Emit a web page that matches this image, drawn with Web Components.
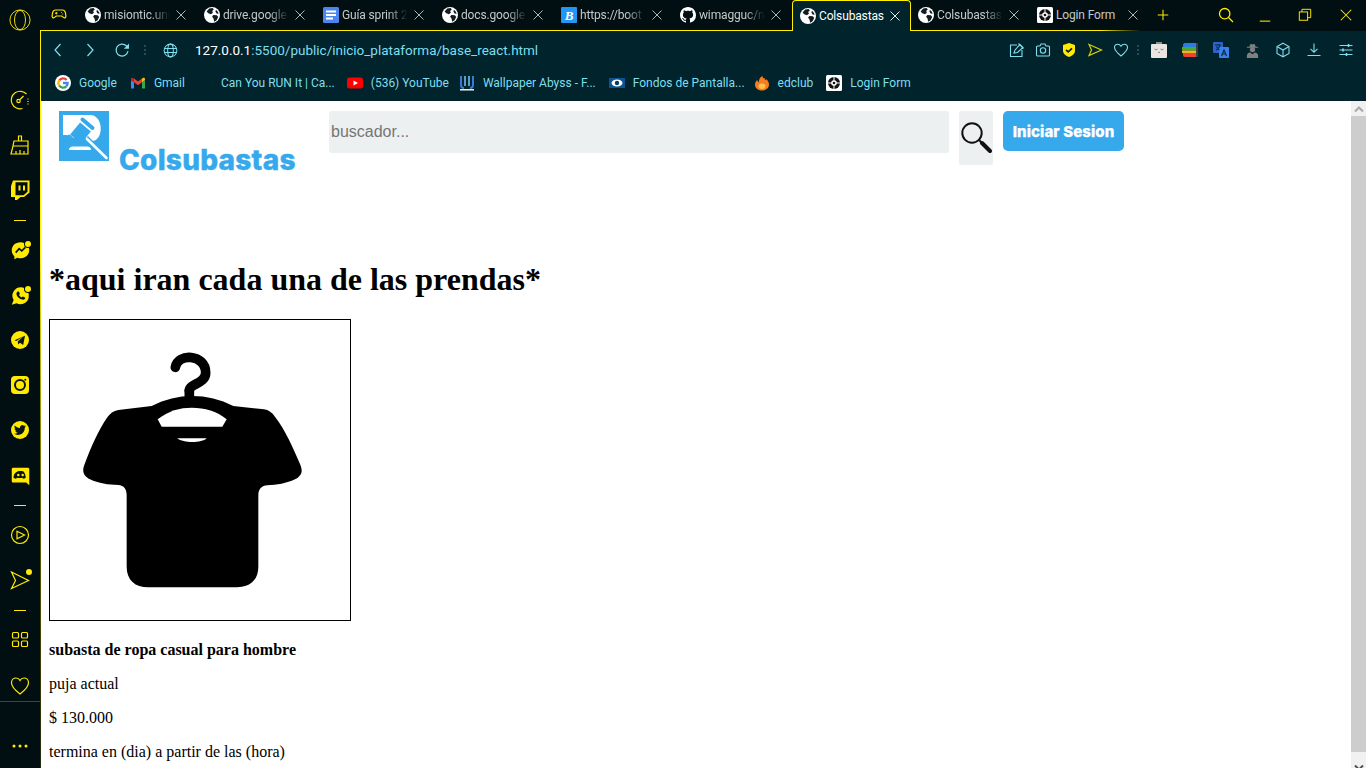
<!DOCTYPE html>
<html lang="es">
<head>
<meta charset="utf-8">
<title>Colsubastas</title>
<style>
    html, body { margin: 0; height: 100%; overflow: hidden; background: #020f12; }
    body { display: flex; font-family: 'Roboto', sans-serif; }
</style>
</head>
<body>
<op-browser>
    <op-rail slot="rail"></op-rail>
    <op-tabstrip slot="tabs">
        <op-tab icon="globe">misiontic.uni</op-tab>
        <op-tab icon="globe">drive.google</op-tab>
        <op-tab icon="gdoc">Guía sprint 2</op-tab>
        <op-tab icon="globe">docs.google</op-tab>
        <op-tab icon="bootstrap">https://boot</op-tab>
        <op-tab icon="github">wimagguc/n</op-tab>
        <op-tab icon="globe" active>Colsubastas</op-tab>
        <op-tab icon="globe">Colsubastas</op-tab>
        <op-tab icon="codepen" solid>Login Form</op-tab>
    </op-tabstrip>
    <op-toolbar slot="toolbar" url-host="127.0.0.1" url-path=":5500/public/inicio_plataforma/base_react.html"></op-toolbar>
    <op-bookmarks slot="bookmarks">
        <op-bookmark icon="google" style="margin-right:1px">Google</op-bookmark>
        <op-bookmark icon="gmail">Gmail</op-bookmark>
        <op-bookmark icon="blank">Can You RUN It | Ca...</op-bookmark>
        <op-bookmark icon="youtube" style="margin-right:-2px">(536) YouTube</op-bookmark>
        <op-bookmark icon="abyss" style="margin-right:1px">Wallpaper Abyss - F...</op-bookmark>
        <op-bookmark icon="fondos" style="margin-right:-3px">Fondos de Pantalla...</op-bookmark>
        <op-bookmark icon="edclub" style="margin-right:1px">edclub</op-bookmark>
        <op-bookmark icon="codepen">Login Form</op-bookmark>
    </op-bookmarks>
    <auction-page slot="page">
        <auction-header slot="header"></auction-header>
        <h1>*aqui iran cada una de las prendas*</h1>
        <auction-card title-text="subasta de ropa casual para hombre" price="$ 130.000" ends="termina en (dia) a partir de las (hora)"></auction-card>
    </auction-page>
</op-browser>

<script>
const YELLOW = '#ffea00';
const DARK = '#0a1517';
const GLOBE = `<circle cx="8" cy="8" r="8" fill="#fff"/><path fill="#111d20" d="M5.2 1.6 8.6 1l1.2 1.6-1.6 1.5.7 1.6-2 1.5-2.6-.9L2.6 4.6zM9.3 8.1l3.6.2 1.3 1.6-1.6 3.4-2.4 1.4-.7-3.2-1.4-1.8zM12 2.800l2 2.200.6 1.800-2-.4-1.200-1.800z"/>`;

const ICONS = {
    // tab strip and favicons
    globe: GLOBE,
    gdoc: `<rect width="16" height="16" rx="1.5" fill="#4a86f0"/><path fill="#fff" d="M3 3.500h10v2H3zM3 7h10v2H3zM3 10.500h7v2H3z"/>`,
    bootstrap: `<rect width="16" height="16" rx="1" fill="#2196f3"/><text x="8" y="12.500" text-anchor="middle" font-family="Liberation Serif" font-style="italic" font-weight="700" font-size="13" fill="#fff">B</text>`,
    github: `<path fill="#fff" d="M8 0C3.58 0 0 3.58 0 8c0 3.54 2.29 6.53 5.47 7.59.4.07.55-.17.55-.38 0-.19-.01-.82-.01-1.49-2.01.37-2.53-.49-2.69-.94-.09-.23-.48-.94-.82-1.13-.28-.15-.68-.52-.01-.53.63-.01 1.08.58 1.23.82.72 1.21 1.87.87 2.33.66.07-.52.28-.87.51-1.07-1.78-.2-3.64-.89-3.64-3.95 0-.87.31-1.59.82-2.15-.08-.2-.36-1.02.08-2.12 0 0 .67-.21 2.2.82.64-.18 1.32-.27 2-.27.68 0 1.36.09 2 .27 1.53-1.04 2.2-.82 2.2-.82.44 1.1.16 1.92.08 2.12.51.56.82 1.27.82 2.15 0 3.07-1.87 3.75-3.65 3.95.29.25.54.73.54 1.48 0 1.07-.01 1.93-.01 2.2 0 .21.15.46.55.38A8.013 8.013 0 0016 8c0-4.42-3.58-8-8-8z"/>`,
    codepen: `<rect width="16" height="16" rx="1.500" fill="#fff"/><circle cx="8" cy="8" r="6" fill="#111"/><circle cx="8" cy="8" r="2.800" fill="#fff"/><path stroke="#fff" stroke-width="1" d="M8 2v12M2 8h12"/><circle cx="8" cy="8" r="1.300" fill="#111"/>`,
    gamepad: `<path fill="none" stroke="${YELLOW}" stroke-width="1.200" d="M4.600 3h6.800c1.700 0 2.600 1 3 2.600l.5 3.400c.2 1.500-1.300 2.400-2.400 1.400L10.700 9H5.300l-1.800 1.400C2.400 11.400.9 10.500 1.100 9l.5-3.400C2 4 2.900 3 4.600 3z"/><path stroke="${YELLOW}" stroke-width="1" d="M4 6.200h2.600M5.300 5v2.400M10.200 5.600h.8M11.400 7h.8"/>`,
    google: `<circle cx="8" cy="8" r="8" fill="#fff"/><path fill="none" stroke-width="2.300" stroke="#ea4335" d="M11.600 5A4.600 4.600 0 0 0 4.300 5.300"/><path fill="none" stroke-width="2.300" stroke="#fbbc05" d="M4.300 5.300a4.600 4.600 0 0 0 0 5.400"/><path fill="none" stroke-width="2.300" stroke="#34a853" d="M4.300 10.700a4.600 4.600 0 0 0 7 .7"/><path fill="none" stroke-width="2.300" stroke="#4285f4" d="M11.300 11.400A4.600 4.600 0 0 0 12.600 8H8"/>`,
    gmail: `<path fill="#4285f4" d="M1 13.500V5l3 2.200v6.300z"/><path fill="#34a853" d="M12 13.500V7.200L15 5v8.500z"/><path fill="#ea4335" d="M4 7.200V3.600l4 3 4-3v3.600L8 10.200z"/><path fill="#c5221f" d="M1 5V4C1 2.900 2.300 2.300 3.200 3L4 3.600v3.600z"/><path fill="#fbbc04" d="M15 5V4c0-1.100-1.300-1.700-2.200-1L12 3.600v3.600z"/>`,
    blank: ``,
    youtube: `<rect y="2.500" width="16" height="11" rx="2.500" fill="#f00"/><path fill="#fff" d="M6.500 5.500v5L11 8z"/>`,
    abyss: `<path fill="none" stroke="#2f7fd6" stroke-width="2" d="M2 1v9c0 2.500 1 3 3 3M14 1v9c0 2.500-1 3-3 3"/><path fill="none" stroke="#7fc4f5" stroke-width="1.500" d="M6 1v10M10 1v10"/><path stroke="#fff" stroke-width="1.400" d="M1 14.800h14"/>`,
    fondos: `<rect y="3" width="16" height="10" fill="#0b5394"/><ellipse cx="8" cy="8" rx="5.500" ry="3.500" fill="#fff"/><circle cx="8" cy="8" r="2.200" fill="#0b3a66"/>`,
    edclub: `<path fill="#f57c1f" d="M8 15.500C3.800 15.500 1 13 1 9.500 1 7.500 2 6 3.500 5c0 1.500.7 2 1.300 2.200C4.800 4.500 6 2 8.500.8 8.300 2.800 9.500 3.500 10.800 3 10.400 4 10.800 4.700 11.700 5 11.900 4.600 12.100 4.400 12.500 4.200 14 5.800 15 7.500 15 9.500c0 3.500-3 6-7 6z"/><path fill="#ffc04d" d="M8 14c-2 0-3.500-1.300-3.500-3S6.500 8.500 8 8.500s3.500.8 3.500 2.500S10 14 8 14z"/>`,

    // toolbar
    back: `<path fill="none" stroke="currentColor" stroke-width="1.200" d="M10.500 2 5 8l5.500 6"/>`,
    forward: `<path fill="none" stroke="currentColor" stroke-width="1.200" d="M5.500 2 11 8l-5.500 6"/>`,
    reload: `<path fill="none" stroke="currentColor" stroke-width="1.200" d="M14 9a6 6 0 1 1-1.700-5.200L14 5.800"/><path fill="currentColor" d="M15 1.500v5.200H9.800z"/>`,
    web: `<g fill="none" stroke="currentColor" stroke-width="1.100"><circle cx="8" cy="8" r="6.800"/><ellipse cx="8" cy="8" rx="3" ry="6.800"/><path d="M1.800 5.800h12.400M1.800 10.200h12.400"/></g>`,
    snapedit: `<g fill="none" stroke="currentColor" stroke-width="1.100"><path d="M8 3H1.500v11.500H13V8"/><path d="m5 11 1-3 5-5.500 3 3-5.500 5-3.500.5zM9.500 1.500l5 5"/></g>`,
    camera: `<g fill="none" stroke="currentColor" stroke-width="1.100"><path d="M2.500 4H5l1-2h4l1 2h2.500c.6 0 1 .4 1 1v8c0 .6-.4 1-1 1h-11c-.6 0-1-.4-1-1V5c0-.6.4-1 1-1z"/><circle cx="8" cy="8.500" r="2.700"/></g>`,
    shield: `<path fill="${YELLOW}" d="M8 1l6 2v5.500c0 3.300-2.700 5.500-6 6.500-3.300-1-6-3.200-6-6.500V3z"/><path fill="none" stroke="#0b1a1c" stroke-width="1.600" d="m5 7.800 2.200 2.100L11 6.300"/>`,
    send: `<path fill="none" stroke="#d9d000" stroke-width="1.200" d="M2 2.500 14.500 8 2 13.500 4.500 8z"/>`,
    heartCyan: `<path fill="none" stroke="currentColor" stroke-width="1.100" d="M8 14C3 10 1.500 8 1.500 5.600 1.500 3.500 3 2.200 4.800 2.200 6.200 2.200 7.300 3 8 4.200 8.700 3 9.800 2.200 11.200 2.200c1.800 0 3.300 1.300 3.300 3.400C14.500 8 13 10 8 14z"/>`,
    boxFace: `<path fill="#8d8d8d" d="M5 0h6v2H5z"/><rect y="2" width="16" height="14" rx="1" fill="#e9e6e1"/><path fill="none" stroke="#777" stroke-width=".9" d="M3.500 7l1.500 1 1.500-1M9.500 7l1.500 1 1.500-1M7 10l1 .7 1-.7"/>`,
    stack: `<rect x="14" y="1" width="2" height="14" fill="#3a3f42"/><path fill="#2a7de1" d="M1 3c0-1 .6-2 2-2h11v4H1z"/><path fill="#3dae3a" d="M0 5h14v3.500H0z"/><path fill="#f2b61c" d="M0 8.500h14V11H0z"/><path fill="#ea4335" d="M1 11h13v4H3c-1.400 0-2-1-2-2z"/>`,
    translate: `<rect width="10" height="11" rx="1" fill="#2a64c9"/><rect x="6" y="5" width="10" height="11" rx="1" fill="#3b82e8"/><path fill="none" stroke="#0d2a4a" stroke-width="1.100" d="M2 3h6M5 2v1.500M7 3c-.5 2.500-2 4-4 5M3.500 4.500c.7 1.500 1.500 2.500 3 3.200"/><path fill="none" stroke="#0d2a4a" stroke-width="1.200" d="m8.500 14 2.500-6 2.500 6M9.500 12h3"/>`,
    spy: `<g fill="#808080"><path d="M4.500 4 6 .8l2 .7 2-.7L11.500 4H14v1H2V4z"/><circle cx="8" cy="7" r="2.800"/><path d="M2 16v-2.500C2 11.500 3.500 10.300 5.500 10L8 12l2.500-2c2 .3 3.500 1.500 3.500 3.500V16z"/></g>`,
    cube: `<g fill="none" stroke="currentColor" stroke-width="1.100"><path d="M8 1.200 14 4.500v7L8 14.800 2 11.500v-7z"/><path d="M2 4.500 8 8l6-3.500M8 8v6.800"/></g>`,
    download: `<g fill="none" stroke="currentColor" stroke-width="1.100"><path d="M8 1.500V10M4.500 6.800 8 10.300l3.500-3.500M1.500 13.500h13"/></g>`,
    sliders: `<g fill="none" stroke="currentColor" stroke-width="1.100"><path d="M1.500 3.500h13M1.500 8h13M1.500 12.500h13"/><path stroke-width="1.600" d="M10.500 2v3M5 6.500v3M8.500 11v3"/></g>`,

    // window controls
    search: `<g fill="none" stroke="${YELLOW}" stroke-width="1.300"><circle cx="6.700" cy="6.700" r="5.200"/><path d="m10.500 10.500 4.500 4.500"/></g>`,
    minimize: `<path stroke="${YELLOW}" stroke-width="1.200" d="M2 15h12"/>`,
    restore: `<g fill="none" stroke="${YELLOW}" stroke-width="1.100"><rect x="1.500" y="4.500" width="9.500" height="9.500"/><path d="M4.500 4.500v-3H14.500v9.500H11"/></g>`,
    closeWin: `<path stroke="${YELLOW}" stroke-width="1.200" d="m2 2 12 12M14 2 2 14"/>`,
    plus: `<path stroke="${YELLOW}" stroke-width="1.200" d="M8 2v12M2 8h12"/>`,
    x: `<path stroke="currentColor" stroke-width=".9" d="m1.500 1.500 9 9M10.500 1.500l-9 9"/>`,

    // side rail
    opera: `<g fill="none" stroke="${YELLOW}" stroke-width="1"><circle cx="12" cy="12" r="11"/><ellipse cx="12" cy="12" rx="6" ry="10.500"/></g>`,
    speed: `<g fill="none" stroke="${YELLOW}" stroke-width="1.200"><path d="M14.500 20.500A8.800 8.800 0 1 1 18.500 6"/><circle cx="10.500" cy="13" r="1.700"/><path d="m12 11.500 3.500-3.500"/><path stroke-dasharray="1 1.500" d="M20 10.500v6"/></g>`,
    broom: `<g fill="none" stroke="${YELLOW}" stroke-width="1.200"><path d="M10.500 8V3h3v5"/><path d="M6 8h14v5H5zM5 13h15v8H3z"/><path d="M8 21v-3M12 21v-4M16 21v-3"/></g>`,
    twitch: `<path fill="${YELLOW}" d="M5 2.500h16.500v12l-5.500 4.500h-3.500L9 22H7v-3H3V8z"/><path fill="#020f12" d="M7.500 4.300h12v9.500l-4 3.400H7.500z"/><path fill="${YELLOW}" d="M10.500 7.500h2v5h-2zM15 7.500h2v5h-2z"/>`,
    messenger: `<path fill="${YELLOW}" d="M12 2.500C6.200 2.500 2 6.600 2 11.800c0 2.800 1.200 5.100 3 6.800V22l3.300-1.800c1.200.4 2.400.6 3.700.6 5.800 0 10-4.100 10-9S17.800 2.500 12 2.500z"/><path fill="none" stroke="${DARK}" stroke-width="2" d="m6.500 14.500 4-4.500 3 2.500 4-4"/>`,
    whatsapp: `<path fill="${YELLOW}" d="M12.500 2.500a9.700 9.700 0 0 0-8.300 14.700L2 22.500l5.500-1.700A9.700 9.700 0 1 0 12.500 2.500z"/><path fill="${DARK}" d="M9 7.500c.5-.3 1-.3 1.200.2l1 2c.2.400 0 .7-.2 1l-.7.8c.7 1.300 1.700 2.200 3 2.800l.9-.9c.3-.3.600-.3 1-.1l1.900 1c.4.2.5.7.2 1.200-.7 1.200-2 1.600-3.300 1.200C10.800 15.800 8.500 13.700 7.500 11c-.5-1.500.2-2.800 1.500-3.500z"/>`,
    telegram: `<circle cx="12" cy="12" r="9" fill="${YELLOW}"/><path fill="${DARK}" d="M6.500 12.300 17 7.800 15.200 17 12 14.800l-1.800 1.800-.5-3.200 5.300-4.600-6.700 4.200z"/>`,
    instagram: `<rect x="3" y="3" width="18" height="18" rx="4" fill="${YELLOW}"/><circle cx="12" cy="12" r="5" fill="none" stroke="${DARK}" stroke-width="2"/><circle cx="17.300" cy="6.700" r="1" fill="${DARK}"/>`,
    twitter: `<circle cx="12" cy="12" r="9" fill="${YELLOW}"/><path fill="${DARK}" transform="translate(6 6) scale(.5)" d="M23.953 4.570a10 10 0 01-2.825.775 4.958 4.958 0 002.163-2.723c-.951.555-2.005.959-3.127 1.184a4.920 4.920 0 00-8.384 4.482C7.690 8.095 4.067 6.130 1.640 3.162a4.822 4.822 0 00-.666 2.475c0 1.710.870 3.213 2.188 4.096a4.904 4.904 0 01-2.228-.616v.060a4.923 4.923 0 003.946 4.827 4.996 4.996 0 01-2.212.085 4.936 4.936 0 004.604 3.417 9.867 9.867 0 01-6.102 2.105c-.390 0-.779-.023-1.170-.067a13.995 13.995 0 007.557 2.209c9.053 0 13.998-7.496 13.998-13.985 0-.210 0-.420-.015-.630A9.935 9.935 0 0024 4.590z"/>`,
    discord: `<path fill="${YELLOW}" d="M3.500 3h17c.8 0 1.500.7 1.500 1.500V23l-3.500-3H3.500C2.700 20 2 19.300 2 18.500v-14C2 3.700 2.700 3 3.500 3z"/><path fill="${DARK}" d="M8.500 7.500c2.300-.7 4.700-.7 7 0 1.400 1.500 2.300 4 2.500 7-1 .7-2 1.100-3 1.300l-.8-1.300c-2.200.5-4.200.5-6.400 0L7 15.800c-1-.2-2-.6-3-1.300.2-3 1.100-5.500 4.500-7z"/><circle cx="9.500" cy="11.500" r="1.400" fill="${YELLOW}"/><circle cx="14.500" cy="11.500" r="1.400" fill="${YELLOW}"/>`,
    player: `<g fill="none" stroke="${YELLOW}" stroke-width="1.200"><circle cx="12" cy="12" r="8.500"/><path d="M9 8.300 16.500 12 9 15.700z"/></g>`,
    flow: `<path fill="none" stroke="${YELLOW}" stroke-width="1.200" d="M3.500 4 20.500 12.500 3.500 20.500 7.500 12.500z"/>`,
    apps: `<g fill="none" stroke="${YELLOW}" stroke-width="1.200"><rect x="4.500" y="4.500" width="6" height="5.500" rx="1"/><rect x="13.500" y="4.500" width="6" height="5.500" rx="1"/><rect x="4.500" y="13" width="6" height="5.500" rx="1"/><rect x="13.500" y="13" width="6" height="5.500" rx="1"/></g>`,
    heart: `<path fill="none" stroke="${YELLOW}" stroke-width="1.200" d="M12 21C6 16.500 3.500 13.500 3.500 9.800 3.500 6.800 5.700 5 8 5c1.700 0 3.200.8 4 2.400C12.800 5.800 14.300 5 16 5c2.300 0 4.500 1.800 4.500 4.800C20.500 13.500 18 16.500 12 21z"/>`,
    more: `<g fill="${YELLOW}"><circle cx="6" cy="12" r="1.500"/><circle cx="12" cy="12" r="1.500"/><circle cx="18" cy="12" r="1.500"/></g>`,
};

// viewBox per group: favicons are 16, rail icons 24, close is 12
const ICON_BOX = { x: 12 };
['opera','speed','broom','twitch','messenger','whatsapp','telegram','instagram','twitter','discord','player','flow','apps','heart','more'].forEach(n => ICON_BOX[n] = 24);

class OpIcon extends HTMLElement {
    constructor() {
        super();
        const shadow = this.attachShadow({ mode: 'open' });
        const name = this.getAttribute('name');
        const size = this.getAttribute('size') || 16;
        const box = ICON_BOX[name] || 16;
        shadow.innerHTML = `
            <style>
            :host { display: block; width: ${size}px; height: ${size}px; flex: none; }
            svg { display: block; width: 100%; height: 100%; overflow: visible; }
            </style>
            <svg viewBox="0 0 ${box} ${box}" xmlns="http://www.w3.org/2000/svg">${ICONS[name] || ''}</svg>
        `;
    }
}
customElements.define('op-icon', OpIcon);

class OpBrowser extends HTMLElement {
    constructor() {
        super();
        this.attachShadow({ mode: 'open' }).innerHTML = `
            <style>
            :host { display: grid; grid-template-columns: 40px 1fr; width: 100%; height: 768px; }
            .right { display: flex; flex-direction: column; min-width: 0; }
            .body {
                flex: 1;
                display: flex;
                flex-direction: column;
                min-height: 0;
                border-left: 1px solid;
                border-image: linear-gradient(to bottom, #fff000 0, #fff000 30%, #6d6c00 60%, #3a3c05 85%, #1b2a14 100%) 1;
            }
            </style>
            <slot name="rail"></slot>
            <div class="right">
                <slot name="tabs"></slot>
                <div class="body">
                    <slot name="toolbar"></slot>
                    <slot name="bookmarks"></slot>
                    <slot name="page"></slot>
                </div>
            </div>
        `;
    }
}
customElements.define('op-browser', OpBrowser);

class OpRailItem extends HTMLElement {
    constructor() {
        super();
        const size = this.getAttribute('size') || 24;
        const badge = this.hasAttribute('badge') ? '<span class="badge"></span>' : '';
        this.attachShadow({ mode: 'open' }).innerHTML = `
            <style>
            :host { display: flex; justify-content: center; align-items: center; height: 45px; flex: none; }
            .wrap { position: relative; }
            .badge {
                position: absolute;
                top: 1px;
                right: 0;
                width: 6px;
                height: 6px;
                border-radius: 50%;
                background: #ffea00;
                box-shadow: 0 0 0 1px #020f12;
            }
            </style>
            <div class="wrap">
                <op-icon name="${this.getAttribute('icon')}" size="${size}"></op-icon>
                ${badge}
            </div>
        `;
    }
}
customElements.define('op-rail-item', OpRailItem);

class OpRail extends HTMLElement {
    constructor() {
        super();
        const item = (icon, extra = '') => `<op-rail-item icon="${icon}" ${extra}></op-rail-item>`;
        this.attachShadow({ mode: 'open' }).innerHTML = `
            <style>
            :host { display: flex; flex-direction: column; background: #020f12; height: 768px; }
            .logo { display: flex; justify-content: center; box-sizing: border-box; padding-top: 9px; height: 77.5px; flex: none; }
            .sep { height: 15px; flex: none; display: flex; align-items: center; justify-content: center; }
            .sep::before { content: ''; width: 12px; height: 1px; background: #ffea00; }
            .foot {
                flex: 1;
                border-top: 1px solid #3b4446;
                display: flex;
                align-items: flex-end;
                justify-content: center;
                padding-bottom: 10px;
            }
            </style>
            <div class="logo"><op-icon name="opera" size="22"></op-icon></div>
            ${item('speed')}${item('broom')}${item('twitch')}
            <div class="sep"></div>
            ${item('messenger', 'badge size="21"')}${item('whatsapp', 'badge size="21"')}${item('telegram')}${item('instagram')}${item('twitter')}${item('discord', 'size="21"')}
            <div class="sep"></div>
            ${item('player')}${item('flow', 'badge')}
            <div class="sep"></div>
            ${item('apps')}
            <op-rail-item icon="heart" style="height:38px;padding-top:7px;box-sizing:border-box"></op-rail-item>
            <div class="foot"><op-icon name="more" size="24"></op-icon></div>
        `;
    }
}
customElements.define('op-rail', OpRail);

class OpTab extends HTMLElement {
    constructor() {
        super();
        this.attachShadow({ mode: 'open' }).innerHTML = `
            <style>
            :host {
                display: flex;
                align-items: center;
                box-sizing: border-box;
                min-width: 0;
                height: 31px;
                padding: 0 10px 1px 7px;
                color: #c4c8c8;
                font: 12px 'Roboto', sans-serif;
                letter-spacing: -.15px;
            }
            :host([active]) {
                position: relative;
                margin-bottom: -1px;
                height: 31px;
                padding: 0 9px 1px 7px;
                color: #fff;
                background: #01232c;
                border: 1px solid #fff000;
                border-bottom: 0;
                border-radius: 4px 4px 0 0;
            }
            .title {
                flex: 1;
                min-width: 0;
                margin-left: 3px;
                white-space: nowrap;
                overflow: hidden;
                -webkit-mask-image: linear-gradient(to right, #000 70%, transparent 100%);
                mask-image: linear-gradient(to right, #000 70%, transparent 100%);
            }
            :host([active]) .title, :host([solid]) .title { -webkit-mask-image: none; mask-image: none; }
            op-icon[name="x"] { margin-left: 5px; }
            </style>
            <op-icon name="${this.getAttribute('icon')}"></op-icon>
            <span class="title"><slot></slot></span>
            <op-icon name="x" size="12"></op-icon>
        `;
    }
}
customElements.define('op-tab', OpTab);

class OpTabstrip extends HTMLElement {
    constructor() {
        super();
        this.attachShadow({ mode: 'open' }).innerHTML = `
            <style>
            :host {
                display: flex;
                height: 31px;
                box-sizing: border-box;
                background: #020f12;
                border-bottom: 1px solid;
                border-image: linear-gradient(to right, #fff000 0, #fff000 1060px, rgba(255,240,0,0) 1100px) 1;
            }
            .cell { display: flex; align-items: center; justify-content: center; flex: none; height: 30px; }
            .game { width: 38px; }
            .add { width: 28px; }
            .spacer { flex: 1; }
            .ctl { width: 40px; }
            .ctl.search { width: 39px; }
            .ctl.close { width: 41px; }
            ::slotted(op-tab) { flex: 0 0 119px; }
            </style>
            <div class="cell game"><op-icon name="gamepad"></op-icon></div>
            <slot></slot>
            <div class="cell add"><op-icon name="plus" size="14"></op-icon></div>
            <div class="spacer"></div>
            <div class="cell ctl search"><op-icon name="search"></op-icon></div>
            <div class="cell ctl"><op-icon name="minimize" size="14"></op-icon></div>
            <div class="cell ctl"><op-icon name="restore" size="14"></op-icon></div>
            <div class="cell ctl close"><op-icon name="closeWin" size="14"></op-icon></div>
        `;
    }
}
customElements.define('op-tabstrip', OpTabstrip);

class OpToolbar extends HTMLElement {
    constructor() {
        super();
        const btn = (icon, w, size = 16) => `<div class="btn" style="width:${w}px"><op-icon name="${icon}" size="${size}"></op-icon></div>`;
        this.attachShadow({ mode: 'open' }).innerHTML = `
            <style>
            :host {
                display: flex;
                align-items: center;
                flex: none;
                box-sizing: border-box;
                height: 35px;
                padding: 3px 4px 0 1px;
                background: #01232c;
                color: #7fdfee;
            }
            .btn { display: flex; align-items: center; justify-content: center; flex: none; height: 32px; }
            .dots { flex: none; display: flex; flex-direction: column; gap: 2px; align-items: center; justify-content: center; }
            .dots i { width: 2px; height: 2px; background: #2c4a52; display: block; }
            .url {
                flex: 1;
                margin-left: 7px;
                font: 13.5px 'Roboto', sans-serif;
                white-space: nowrap;
            }
            .url b { font-weight: 400; color: #fff; }
            </style>
            ${btn('back', 32)}${btn('forward', 32)}${btn('reload', 32)}
            <div class="dots" style="width:14px"><i></i><i></i><i></i></div>
            ${btn('web', 36, 15)}
            <div class="url"><b>${this.getAttribute('url-host')}</b>${this.getAttribute('url-path')}</div>
            ${btn('snapedit', 26)}${btn('camera', 26)}${btn('shield', 26)}${btn('send', 26)}${btn('heartCyan', 26)}
            <div class="dots" style="width:8px"><i></i><i></i><i></i></div>
            ${btn('boxFace', 34)}${btn('stack', 27)}${btn('translate', 35)}${btn('spy', 29, 15)}${btn('cube', 31)}${btn('download', 32, 16)}${btn('sliders', 32, 16)}
        `;
    }
}
customElements.define('op-toolbar', OpToolbar);

class OpBookmark extends HTMLElement {
    constructor() {
        super();
        this.attachShadow({ mode: 'open' }).innerHTML = `
            <style>
            :host {
                display: flex;
                align-items: center;
                gap: 8px;
                color: #7fdfee;
                font: 12px 'Roboto', sans-serif;
                white-space: nowrap;
            }
            </style>
            <op-icon name="${this.getAttribute('icon')}"></op-icon>
            <slot></slot>
        `;
    }
}
customElements.define('op-bookmark', OpBookmark);

class OpBookmarks extends HTMLElement {
    constructor() {
        super();
        this.attachShadow({ mode: 'open' }).innerHTML = `
            <style>
            :host {
                display: flex;
                align-items: center;
                gap: 12px;
                flex: none;
                box-sizing: border-box;
                height: 35px;
                padding: 0 0 1px 14px;
                background: #01232c;
            }
            </style>
            <slot></slot>
        `;
    }
}
customElements.define('op-bookmarks', OpBookmarks);

class AuctionHeader extends HTMLElement {
    constructor() {
        super();
        this.attachShadow({ mode: 'open' }).innerHTML = `
            <style>
            :host {
                display: flex;
                align-items: flex-start;
                gap: 10px;
                box-sizing: border-box;
                height: 139px;
                padding: 10px 0 0 18px;
                font-family: 'Inter', sans-serif;
            }
            .brand { display: flex; align-items: flex-start; width: 260px; flex: none; }
            .brand svg { display: block; flex: none; }
            .name {
                margin: 31px 0 0 10px;
                color: #36a9ec;
                font-size: 28px;
                line-height: 36px;
                font-weight: 800;
                letter-spacing: .25px;
                white-space: nowrap;
                -webkit-text-stroke: .4px #36a9ec;
            }
            input {
                width: 620px;
                height: 42px;
                flex: none;
                box-sizing: border-box;
                margin: 0;
                padding: 0 2px;
                border: 0;
                border-radius: 3px;
                background: #edf0f1;
                font: 16px 'Liberation Sans', sans-serif;
                outline: none;
            }
            input::placeholder { color: #757575; opacity: 1; }
            .find {
                display: flex;
                align-items: center;
                justify-content: center;
                width: 34px;
                height: 54px;
                flex: none;
                border-radius: 2px;
                background: #edf0f1;
            }
            .login {
                display: flex;
                align-items: center;
                justify-content: center;
                width: 121px;
                height: 40px;
                flex: none;
                border-radius: 5px;
                background: #36a9ec;
                color: #fff;
                font-size: 15px;
                font-weight: 800;
                letter-spacing: .1px;
                white-space: nowrap;
                -webkit-text-stroke: .25px #fff;
            }
            </style>
            <div class="brand">
                <svg width="50" height="50" viewBox="0 0 50 50" xmlns="http://www.w3.org/2000/svg">
                    <rect width="50" height="50" fill="#36a9ec"/>
                    <path fill="#fff" d="M4 4H31C45 4 45 30 33 30L27 27 10 27 9 24H4Z"/>
                    <path stroke="#36a9ec" stroke-width="5.500" d="M27 27 47 47"/>
                    <path stroke="#fff" stroke-width="2.600" stroke-linecap="round" d="M28 28 47.500 47"/>
                    <path stroke="#36a9ec" stroke-width="14" d="M26.500 16 16.500 28"/>
                    <path stroke="#fff" stroke-width="1.200" d="M21 8.500 34.500 19.500M8.500 24 22 36"/>
                    <path stroke="#36a9ec" stroke-width="4" stroke-linecap="round" d="M23.500 8.500 33.500 17M10 25.500 20.500 35"/>
                    <path fill="#fff" d="M10 39Q10 35.500 14 35.500H28Q32 35.500 32 39Z"/>
                </svg>
                <span class="name">Colsubastas</span>
            </div>
            <input type="text" placeholder="buscador...">
            <div class="find">
                <svg width="32" height="32" viewBox="0 0 32 32" xmlns="http://www.w3.org/2000/svg">
                    <circle cx="12" cy="11" r="9.700" fill="none" stroke="#111" stroke-width="2"/>
                    <path stroke="#111" stroke-width="2" d="m19 18 4 4"/>
                    <path stroke="#111" stroke-width="4" stroke-linecap="round" d="m22 21 8 8"/>
                </svg>
            </div>
            <div class="login">Iniciar Sesion</div>
        `;
    }
}
customElements.define('auction-header', AuctionHeader);

class AuctionCard extends HTMLElement {
    constructor() {
        super();
        this.attachShadow({ mode: 'open' }).innerHTML = `
            <style>
            :host { display: block; font: 16px/18px 'Liberation Serif', serif; color: #000; }
            .pic { display: block; width: 300px; height: 300px; border: 1px solid #000; background: #fff; }
            h4 { margin: 20px 0 16px; font-size: 16px; font-weight: 700; }
            p { margin: 16px 0; }
            </style>
            <svg class="pic" viewBox="-30 -30 900 900" xmlns="http://www.w3.org/2000/svg">
                <path fill="#000" d="M275 228 L175 240 C160 243 150 250 142 262 C115 300 92 355 74 402 C66 422 68 436 90 448 C115 460 145 465 175 465 C192 466 200 478 200 495 V710 C200 750 225 772 265 772 H530 C570 772 595 750 595 710 V495 C595 478 605 467 622 466 C650 465 680 460 705 448 C727 436 729 422 720 402 C700 355 676 300 645 260 C636 248 626 240 612 238 L520 228 C480 208 440 198 397 198 C355 198 315 208 275 228 Z"/>
                <path fill="#fff" d="M293 268 C325 242 360 233 395 233 C435 233 470 243 500 268 L487 290 H305 Z"/>
                <path fill="#fff" d="M352 325 H440 C425 340 370 340 352 325 Z"/>
                <path fill="none" stroke="#000" stroke-width="29" stroke-linecap="round" d="M346 112 C352 68 437 72 437 128 C437 162 388 160 388 182"/>
                <path fill="none" stroke="#000" stroke-width="29" d="M388 178 V210"/>
            </svg>
            <h4>${this.getAttribute('title-text')}</h4>
            <p>puja actual</p>
            <p>${this.getAttribute('price')}</p>
            <p>${this.getAttribute('ends')}</p>
        `;
    }
}
customElements.define('auction-card', AuctionCard);

class AuctionPage extends HTMLElement {
    constructor() {
        super();
        this.attachShadow({ mode: 'open' }).innerHTML = `
            <style>
            :host {
                display: grid;
                grid-template-columns: 1fr 15px;
                flex: 1;
                min-height: 0;
                height: 665px;
                background: #fff;
                border-bottom: 2px solid #050a0b;
                overflow: hidden;
            }
            .view { overflow: hidden; min-width: 0; }
            .content { padding: 21px 8px 0; }
            ::slotted(h1) {
                margin: 0 0 21px;
                font: 700 32px/37px 'Liberation Serif', serif;
                color: #000;
            }
            .bar { display: flex; flex-direction: column; background: #f1f1f1; }
            .arrow { flex: none; height: 15px; display: flex; align-items: center; justify-content: center; }
            .thumb { flex: 1; background: #cdcdcd; }
            </style>
            <div class="view">
                <slot name="header"></slot>
                <div class="content"><slot></slot></div>
            </div>
            <div class="bar">
                <div class="arrow"><svg width="10" height="8" viewBox="0 0 10 8"><path fill="none" stroke="#a8a8a8" stroke-width="2" d="M1 6.500 5 2.500l4 4"/></svg></div>
                <div class="thumb"></div>
                <div class="arrow" style="height:25px;align-items:flex-end;padding-bottom:5px;box-sizing:border-box"><svg width="10" height="8" viewBox="0 0 10 8"><path fill="none" stroke="#505050" stroke-width="2" d="M1 1.500 5 5.500l4-4"/></svg></div>
            </div>
        `;
    }
}
customElements.define('auction-page', AuctionPage);
</script>
</body>
</html>
